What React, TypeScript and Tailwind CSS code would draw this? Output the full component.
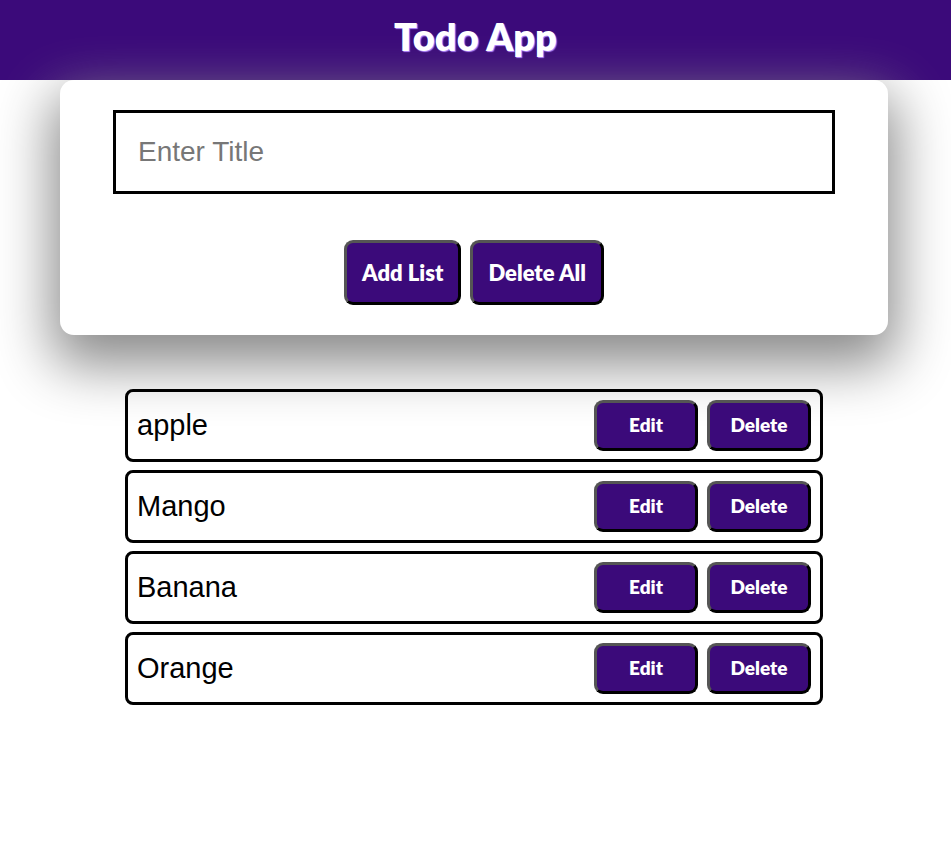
import { useState } from "react";

const initialTodos = ["apple", "Mango", "Banana", "Orange"];

const btn =
  "bg-[#3b0a7a] text-white font-extrabold rounded-[9px] border-[3px] border-t-[#555] border-l-[#555] border-b-black border-r-black [font-family:Lato,'Noto_Sans',sans-serif]";

export default function App() {
  const [todos, setTodos] = useState(initialTodos);
  const [title, setTitle] = useState("");

  return (
    <div className="min-h-screen bg-white">
      <header className="h-[80px] flex items-start justify-center bg-[#3b0a7a]">
        <h1 className="mt-[13px] text-[38px] leading-[46px] font-extrabold text-white [font-family:Lato,'Noto_Sans',sans-serif] [text-shadow:1px_1px_1px_#b48cff]">
          Todo App
        </h1>
      </header>

      <div className="w-[828px] ml-[60px] bg-white rounded-[14px] shadow-[0_22px_55px_8px_#8a8a8a] pt-[30px] pb-[30px]">
        <div className="flex justify-center">
          <input
            value={title}
            onChange={(e) => setTitle(e.target.value)}
            placeholder="Enter Title"
            className="w-[722px] h-[84px] border-[3px] border-black px-[22px] text-[28px] outline-none placeholder:text-[#777] [font-family:'Liberation_Sans',Arial,sans-serif]"
          />
        </div>
        <div className="flex justify-center gap-[9px] mt-[46px]">
          <button
            className={`${btn} h-[65px] px-[15px] text-[22px]`}
            onClick={() => {
              if (title.trim()) {
                setTodos([...todos, title.trim()]);
                setTitle("");
              }
            }}
          >
            Add List
          </button>
          <button className={`${btn} h-[65px] px-[15px] text-[22px]`} onClick={() => setTodos([])}>
            Delete All
          </button>
        </div>
      </div>

      <ul className="w-[698px] ml-[125px] mt-[54px] flex flex-col gap-[8px]">
        {todos.map((t, i) => (
          <li
            key={i}
            className="h-[73px] border-[3px] border-black rounded-[8px] flex items-center justify-between pl-[9px] pr-[9px]"
          >
            <span className="text-[29px] text-black [font-family:'Liberation_Sans',Arial,sans-serif]">{t}</span>
            <div className="flex gap-[9px]">
              <button className={`${btn} w-[104px] h-[51px] text-[19px]`}>Edit</button>
              <button
                className={`${btn} w-[104px] h-[51px] text-[19px]`}
                onClick={() => setTodos(todos.filter((_, j) => j !== i))}
              >
                Delete
              </button>
            </div>
          </li>
        ))}
      </ul>
    </div>
  );
}
